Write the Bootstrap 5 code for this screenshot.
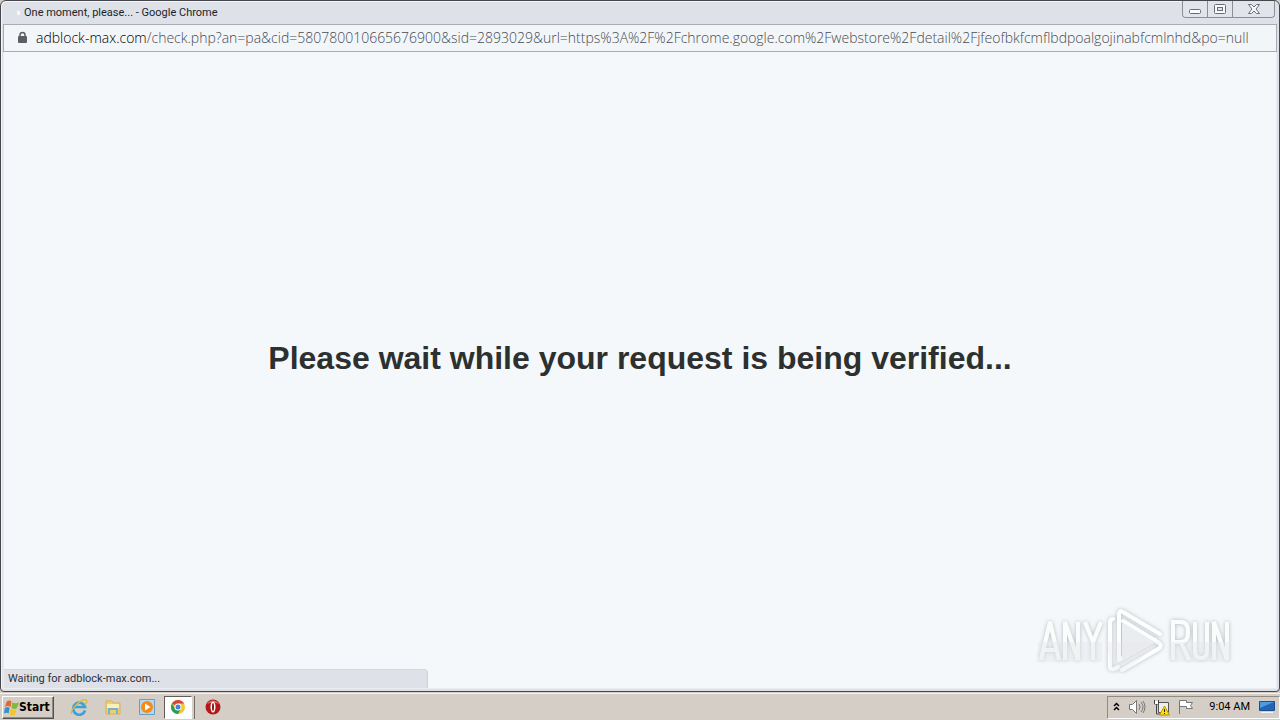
<!DOCTYPE html>
<html lang="en">
<head>
<meta charset="utf-8">
<meta name="viewport" content="width=device-width, initial-scale=1">
<title>One moment, please...</title>
<link href="https://cdn.jsdelivr.net/npm/bootstrap@5.3.0/dist/css/bootstrap.min.css" rel="stylesheet">
<style>
body{font-family:Roboto,"DejaVu Sans Condensed",sans-serif;font-size:11px;line-height:16px;background:#d5cec6;color:#1b1f28}
.window{background:#dee1e8;border:1px solid #45464c;border-radius:6px 6px 4px 4px;padding:0 2px 2px;box-shadow:inset 1px 1px #f4f6f9}
.titlebar{height:23px;padding-left:14px}
.favicon-dot{width:3px;height:4px;background:#f5f7fa;margin-right:4px}
.win-controls{border:1px solid #8b8e96;border-top:0;border-radius:0 0 4px 4px;height:17px;margin-right:2px}
.win-btn{background:#e1e4eb;border:0;border-right:1px solid #8b8e96;width:25px;padding:0}
.win-btn:last-child{width:41px;border-right:0;border-radius:0 0 4px 4px}
.win-btn:first-child{border-radius:0 0 0 4px}
.win-btn svg{display:block;margin:2px auto 0}
.address{height:28px;border:1px solid #a9acb2;background:#f3f6f9;padding:0 13px;font-family:"Open Sans","Noto Sans",sans-serif;font-weight:300;font-size:14px;line-height:20px;color:#484b50}
.address .host{color:#000}
.viewport{background:#f4f8fb;border:1px solid #e9edf2;border-top:0}
.viewport h1{font:bold 32px/40px "Liberation Sans",Arial,sans-serif;color:#2c302f}
.status{left:0;bottom:0;width:33.3%;height:19px;padding-left:4px;background:#dee1e8;border-top:1px solid #d3d7de;border-right:1px solid #d0d4da;border-radius:0 4px 0 0;line-height:18px;color:#2c3037}
.watermark{right:41px;bottom:14px}
.taskbar{height:27px;border-top:1px solid #f3f1ec;margin-top:1px;padding:1px 0 1px 2px}
.start{width:52px;height:23px;background:#d5cec6;border:1px solid;border-color:#fff #55524e #55524e #fff;box-shadow:inset -1px -1px #8f8b85;color:#000;font:bold 12px/16px "DejaVu Sans Condensed",sans-serif;padding:0}
.task{width:34px;height:23px;background:none;border:0;padding:0}
.task.active{background:#fff;border:1px solid;border-color:#605d59 #fff #fff #605d59;width:28px;box-shadow:2px 0 #d5cec6,3px 0 #706c68}
.tray{height:23px;border:1px solid;border-color:#8f8b85 #fff #fff #8f8b85;padding:0 3px 0 4px}
.tray button{background:none;border:0;padding:0;width:24px;height:20px;line-height:0}
.tray .slim{width:9px}
.tray .desk{width:18px}
.clock{color:#000;white-space:nowrap}
svg{display:inline-block;flex:none}
</style>
</head>
<body class="vh-100 d-flex flex-column overflow-hidden">
<div class="window flex-grow-1 d-flex flex-column">
  <header class="titlebar d-flex align-items-center">
    <span class="favicon-dot"></span>
    <span class="flex-grow-1">One moment, please... - Google Chrome</span>
    <div class="win-controls d-flex align-self-start">
      <button class="win-btn" aria-label="Minimize"><svg width="14" height="14" viewBox="0 0 14 14"><rect x="1.500" y="6.500" width="11" height="4" rx="1" fill="#fafbfc" stroke="#6a6d76"/></svg></button>
      <button class="win-btn" aria-label="Maximize"><svg width="14" height="14" viewBox="0 0 14 14"><rect x="1.500" y="1.500" width="11" height="9" rx="1" fill="#fafbfc" stroke="#6a6d76"/><rect x="4.500" y="4.500" width="5" height="3" fill="#e1e4eb" stroke="#6a6d76"/></svg></button>
      <button class="win-btn" aria-label="Close"><svg width="14" height="14" viewBox="0 0 14 14"><path d="M1.500 1.500h3L7 4l2.500-2.500h3L9 6l3.500 4.500h-3L7 8l-2.500 2.500h-3L5 6z" fill="#fafbfc" stroke="#6a6d76"/></svg></button>
    </div>
  </header>
  <div class="address d-flex align-items-center text-nowrap">
    <svg class="me-2" width="11" height="14" viewBox="0 0 11 14"><path d="M3 6V4a2.500 2.500 0 0 1 5 0v2" fill="none" stroke="#5b5e64" stroke-width="1.500"/><rect x="1" y="5" width="9" height="7" rx="1" fill="#5b5e64"/></svg>
    <div><span class="host">adblock-max.com</span>/check.php?an=pa&amp;cid=580780010665676900&amp;sid=2893029&amp;url=https%3A%2F%2Fchrome.google.com%2Fwebstore%2Fdetail%2Fjfeofbkfcmflbdpoalgojinabfcmlnhd&amp;po=null</div>
  </div>
  <main class="viewport flex-grow-1 position-relative d-flex align-items-center justify-content-center">
    <h1 class="mb-4 text-center">Please wait while your request is being verified...</h1>
    <svg class="watermark position-absolute" width="200" height="68" viewBox="0 0 200 68" role="img" aria-label="ANY RUN">
      <defs>
        <filter id="glow" x="-10%" y="-10%" width="120%" height="120%"><feDropShadow dx="0" dy="0" stdDeviation="2" flood-color="#888c90" flood-opacity=".6"/></filter>
      </defs>
      <g filter="url(#glow)" fill="none" stroke-width="4" stroke="#fdfefe">
        <path d="M6 54l9-38 9 38M9 44h12M30 54V16l13 38V16M50 16l8 20 8-20M58 36v18" stroke="#fbfcfc"/>
        <path d="M138 54V16h8q7 0 7 10t-7 10h-8M146 36l8 18M160 16v29q0 7 6 7t6-7V16M179 54V16l13 38V16" stroke="#fbfcfc"/>
        <path d="M78 13q-3 0-3 4v42q0 5 4 4l4-2M84 52V8q0-4 4-2l37 22M87 64l36-21q5-3 1-6L88 15M84 54l36-20" stroke-linecap="round"/>
        <path d="M87 16l33 20-33 18z" fill="#eaedef" stroke="none"/>
      </g>
      <path d="M3 36h64v20H3zM135 36h61v20h-61z" fill="#e4e6e8" opacity=".45"/>
      <path d="M72 36h54L88 67l-12-2z" fill="#e4e6e8" opacity=".3"/>
    </svg>
    <div class="status position-absolute">Waiting for adblock-max.com...</div>
  </main>
</div>
<footer class="taskbar d-flex align-items-center">
  <button class="start d-flex align-items-center"><svg width="16" height="17" viewBox="0 0 17 17"><path d="M4 2q3-2 5 0L8 8Q5 6 2 8z" fill="#e5662f"/><path d="M10 3q3 2 7 0l-2 6q-3 2-6 0z" fill="#82b83c"/><path d="M2 9q3-2 5 0l-1 6q-2-2-5 0z" fill="#3b8fd0"/><path d="M8 10q3 2 6 0l-1 6q-3 2-6 0z" fill="#f4c430"/></svg>Start</button>
  <nav class="d-flex ms-2 align-items-center">
    <button class="task" aria-label="Internet Explorer"><svg width="18" height="18" viewBox="0 0 18 18"><path d="M15 12.500A6 6 0 1 1 15 9H5" fill="none" stroke="#35a3e0" stroke-width="2.700"/><path d="M2 16C-2 14 11 0 16 2q2 1-1 5" fill="none" stroke="#e3b63e" stroke-width="1.300"/></svg></button>
    <button class="task" aria-label="File Explorer"><svg width="18" height="18" viewBox="0 0 18 18"><path d="M2 3h6l1 2h7v11H2z" fill="#edcf6c" stroke="#d5b357"/><path d="M3 6h12v4H3z" fill="#fbf1b8"/><path d="M5 16v-5h8v5" fill="none" stroke="#71b5d6" stroke-width="2"/></svg></button>
    <button class="task" aria-label="Media Player"><svg width="18" height="18" viewBox="0 0 18 18"><path d="M1.500 1.500h15v15h-15z" fill="#b9d7eb" stroke="#6a9dc4"/><circle cx="9" cy="9" r="6" fill="#f28b1c"/><path d="M7 5.500v7L12.500 9z" fill="#fff"/></svg></button>
    <button class="task active" aria-label="Google Chrome"><svg width="16" height="16" viewBox="0 0 16 16"><circle cx="8" cy="8" r="7" fill="#f5c52b"/><path d="M8 8L1.900 4.500A7 7 0 0 1 14.100 4.500H8z" fill="#da4437"/><path d="M1.900 4.500A7 7 0 0 0 8 15l3-5.500L8 8l-3 1.500z" fill="#309b58"/><circle cx="8" cy="8" r="3.500" fill="#fff"/><circle cx="8" cy="8" r="2.500" fill="#4285d8"/></svg></button>
    <button class="task ms-1" aria-label="Opera"><svg width="16" height="16" viewBox="0 0 16 16"><circle cx="8" cy="8" r="7.500" fill="#b31919"/><path d="M2 5a7 7 0 0 1 12 0Q8 2 2 5" fill="#de6e62"/><ellipse cx="8" cy="8" rx="2.500" ry="5.500" fill="#fff"/><ellipse cx="8" cy="8" rx="1" ry="4" fill="#8d1010"/></svg></button>
  </nav>
  <div class="tray ms-auto d-flex align-items-center">
    <button class="slim" aria-label="Show hidden icons"><svg width="9" height="12" viewBox="0 0 9 12"><path d="M2 5l2.500-2.500L7 5M2 9l2.500-2.500L7 9" fill="none" stroke="#000" stroke-width="1.500"/></svg></button>
    <button class="ms-1" aria-label="Volume"><svg width="18" height="16" viewBox="0 0 18 16"><path d="M1.500 5.500h3l4-4v13l-4-4h-3z" fill="#fff" stroke="#777"/><path d="M11 5q2 3 0 6M13 3q4 5 0 10M15 2q4 6 0 12" fill="none" stroke="#777"/></svg></button>
    <button aria-label="Network"><svg width="17" height="17" viewBox="0 0 17 17"><path d="M5.500 3.500h10v10h-10z" fill="#eee" stroke="#555"/><path d="M1.500 1v4h4V1M3.500 5v10h5" fill="none" stroke="#444"/><path d="M2 2h3v3H2z" fill="#fff"/><path d="M11.500 7l5 9h-10z" fill="#ffdc22" stroke="#b59400"/><path d="M11.500 10v3m0 1v1" stroke="#222"/></svg></button>
    <button aria-label="Action Center"><svg width="17" height="16" viewBox="0 0 17 16"><path d="M2.500 15V1.500h7v2h6l-2 3 2 3h-6v-2h-7" fill="#fff" stroke="#777"/></svg></button>
    <time class="clock ms-2 me-2 ps-1">9:04 AM</time>
    <button class="desk" aria-label="Show desktop"><svg width="16" height="14" viewBox="0 0 16 14"><path d="M.5 1.500h15v9H.5z" fill="#2464b5" stroke="#1d4e94"/><path d="M1 2h14L1 8z" fill="#4c9de0"/><path d="M2 12.500h12" stroke="#f4f4f4"/></svg></button>
  </div>
</footer>
<script src="https://cdn.jsdelivr.net/npm/bootstrap@5.3.0/dist/js/bootstrap.bundle.min.js"></script>
</body>
</html>
